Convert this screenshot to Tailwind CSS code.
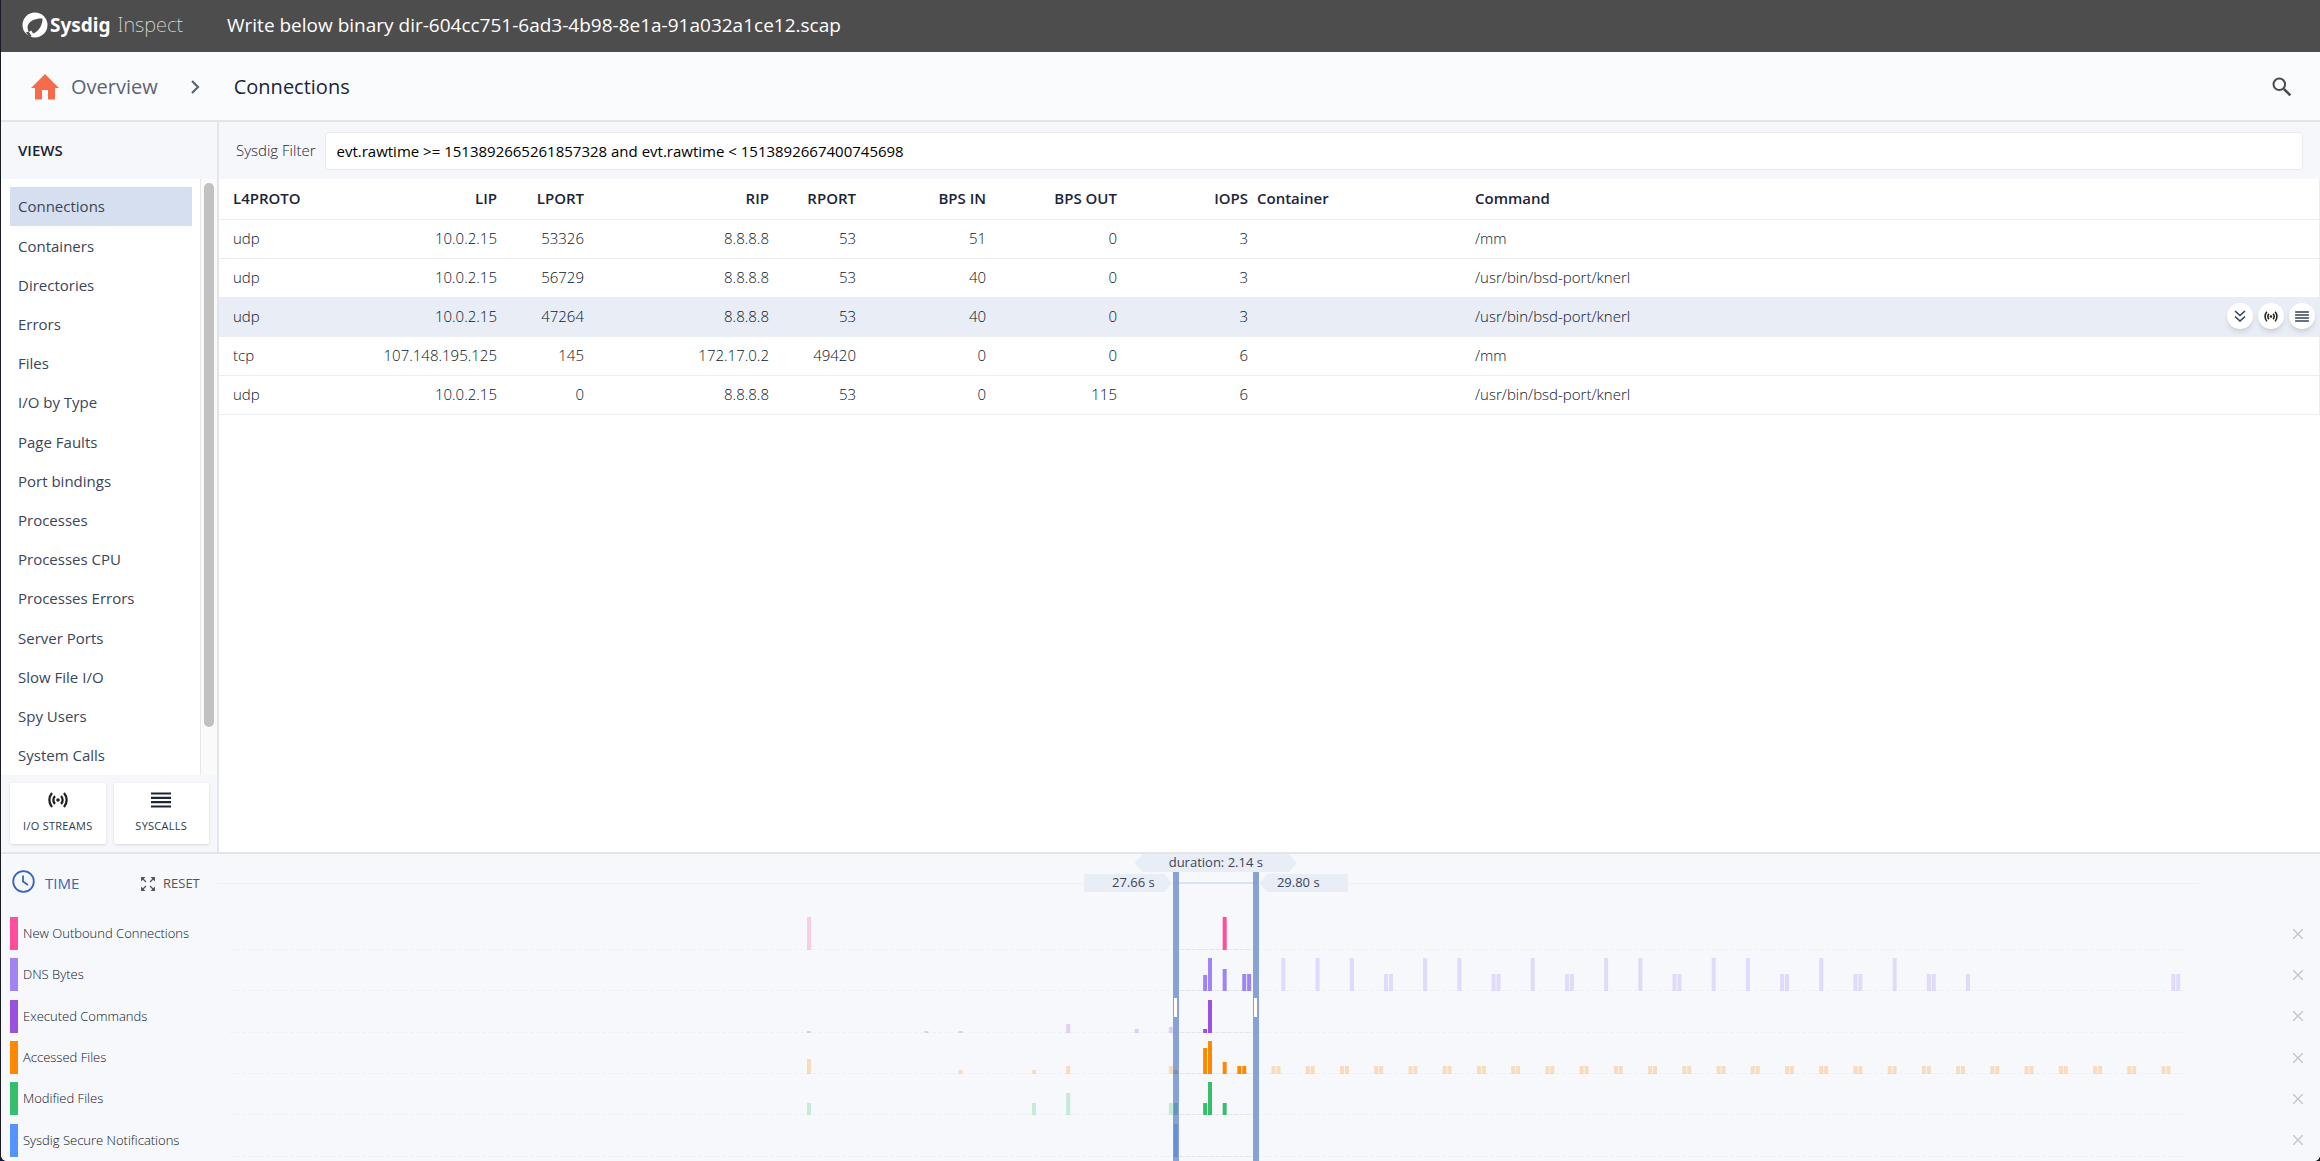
<!DOCTYPE html>
<html lang="en">
<head>
  <meta charset="UTF-8">
  <title>Sysdig Inspect</title>
  <script src="https://cdn.jsdelivr.net/npm/@tailwindcss/browser@4"></script>
</head>
<body class="bg-[#1b1b26] font-['Open_Sans',sans-serif] text-[15px] text-[#3b4559]">

  <!-- Shared icons -->
  <svg class="hidden">
    <symbol id="streams" viewBox="0 0 20 16">
      <circle cx="10" cy="8" r="1.8" fill="currentColor"/>
      <g fill="none" stroke="currentColor" stroke-width="2.3">
        <path d="M7 4.2a5.2 5.2 0 0 0 0 7.6M13 4.2a5.2 5.2 0 0 1 0 7.6"/>
        <path d="M4 1a10.6 10.6 0 0 0 0 14M16 1a10.6 10.6 0 0 1 0 14"/>
      </g>
    </symbol>
    <symbol id="lines" viewBox="0 0 20 16">
      <path d="M0 1.5h20M0 5.8h20M0 10.1h20M0 14.5h20" stroke="currentColor" stroke-width="2.2"/>
    </symbol>
  </svg>

  <div class="h-screen flex flex-col ml-px rounded-b-md overflow-hidden bg-white">

    <!-- Top bar -->
    <header class="h-[52px] shrink-0 flex items-center bg-[#4d4d4d] text-white pl-[21px] pb-0.5">
      <div class="w-[205px] flex items-center">
        <svg class="w-[26px] h-[26px]" viewBox="0 0 26 26">
          <circle cx="13" cy="13" r="12.5" fill="#fff"/>
          <path d="M20.5 6.5C15 6 8 8 6 13c-1 2.500-.3 5 1 7l2.300-1.500 1.700 3C16 20 20.500 14 20.500 6.500z" fill="#4d4d4d"/>
          <path d="M4 20.500l2.500-1 3 4.600-1.800 1.200z" fill="#4d4d4d"/>
        </svg>
        <span class="ml-0.5 font-['Noto_Sans',sans-serif] text-[19px] font-bold">Sysdig</span>
        <span class="ml-[7px] font-['Noto_Sans',sans-serif] text-[20px] font-extralight text-[#dddddd]">Inspect</span>
      </div>
      <h1 class="text-[19px]">Write below binary dir-604cc751-6ad3-4b98-8e1a-91a032a1ce12.scap</h1>
    </header>

    <!-- Breadcrumb -->
    <nav class="h-[70px] shrink-0 flex items-center border-b-2 border-[#e2e5e9] bg-[#fafbfd] pl-[30px] pr-7 pt-0.5 text-[20px]">
      <a href="#" class="flex items-center text-[#5a6375]">
        <svg class="w-7 h-[26px] mr-3" viewBox="0 0 28 26"><path d="M14 0L28 14h-4v11.500h-7V16h-6v9.500H4V14H0z" fill="#f76a4c"/></svg>
        Overview
      </a>
      <svg class="w-2.5 h-4 ml-8 mr-[34px]" viewBox="0 0 10 16"><path d="M2 2l6 6-6 6" fill="none" stroke="#5a6375" stroke-width="2.200"/></svg>
      <span class="text-[#1c2438]">Connections</span>
      <button class="ml-auto" aria-label="Search">
        <svg class="w-5 h-5" viewBox="0 0 20 20" fill="none" stroke="#4a4a4a"><circle cx="7.300" cy="7.300" r="5.800" stroke-width="2"/><path d="M11.800 11.800l6.500 6.500" stroke-width="2.600"/></svg>
      </button>
    </nav>

    <main class="flex-1 min-h-0 flex">
      <!-- Views -->
      <aside class="w-[218px] shrink-0 flex flex-col bg-[#f5f7fb] border-r-2 border-[#e2e5e9]">
        <h2 class="h-[57px] shrink-0 flex items-center pl-[17px] font-semibold text-[#1c2438]">VIEWS</h2>
        <div class="flex-1 min-h-0 flex bg-white">
          <ul id="views" class="flex-1 flex flex-col pt-2 pl-[9px] pr-2"></ul>
          <div class="w-[17px] bg-[#fafafa] border-l border-[#e8e8e8] pt-1 px-[3px]">
            <div class="h-[544px] rounded-full bg-[#c1c1c1]"></div>
          </div>
        </div>
        <div class="shrink-0 flex gap-2 pl-[9px] pr-2 py-2 text-[11px] tracking-wide text-[#2c3a50]">
          <button class="flex-1 h-[61px] flex flex-col items-center justify-center gap-2.5 bg-white rounded-xs shadow">
            <svg class="w-5 h-4 text-[#222222]"><use href="#streams"/></svg>
            I/O STREAMS
          </button>
          <button class="flex-1 h-[61px] flex flex-col items-center justify-center gap-2.5 bg-white rounded-xs shadow">
            <svg class="w-5 h-4 text-[#1c2438]"><use href="#lines"/></svg>
            SYSCALLS
          </button>
        </div>
      </aside>

      <!-- Connections -->
      <section class="flex-1 min-w-0">
        <div class="h-[57px] flex items-center gap-2.5 bg-[#f5f7fb] pl-[17px] pr-[17px]">
          <label for="filter" class="font-light text-[#1c2438]">Sysdig Filter</label>
          <input id="filter" type="text" value="evt.rawtime &gt;= 1513892665261857328 and evt.rawtime &lt; 1513892667400745698" class="flex-1 h-[38px] rounded border border-[#e8eaee] bg-white px-2.5 text-black">
        </div>
        <table class="w-full table-fixed border-r border-[#e9eef2]">
          <thead class="text-[#1c2438]">
            <tr class="h-10 border-b border-[#e9eef2] *:px-1 *:pb-0.5 *:font-semibold *:text-right">
              <th class="w-[98px] pl-3.5! text-left!">L4PROTO</th>
              <th class="w-[184px]">LIP</th>
              <th class="w-[87px]">LPORT</th>
              <th class="w-[185px]">RIP</th>
              <th class="w-[87px]">RPORT</th>
              <th class="w-[130px]">BPS IN</th>
              <th class="w-[131px]">BPS OUT</th>
              <th class="w-[131px]">IOPS</th>
              <th class="w-[219px] pl-[5px]! text-left!">Container</th>
              <th class="text-left!">Command</th>
            </tr>
          </thead>
          <tbody id="rows" class="font-light text-[#0c1428]"></tbody>
        </table>
      </section>
    </main>

    <!-- Timeline -->
    <section class="relative shrink-0 h-[309px] flex flex-col border-t-2 border-[#e2e5e9] bg-[#f6f8fc]">
      <div class="h-[59px] shrink-0 flex items-center pr-[121px]">
        <h2 class="w-[140px] flex items-center gap-2.5 pl-[11px] text-[#3565c0]">
          <svg class="w-[23px] h-[23px] mb-1" viewBox="0 0 23 23" fill="none" stroke="currentColor" stroke-width="1.800"><circle cx="11.500" cy="11.500" r="10.300"/><path d="M11 5.500v6l5 3.500"/></svg>
          TIME
        </h2>
        <button class="w-[77px] flex items-center gap-2 text-[13px] text-[#555555]">
          <svg class="w-3.5 h-3.5 shrink-0" viewBox="0 0 14 14" fill="#555" stroke="#555" stroke-width="1.300">
            <path stroke="none" d="M0 0h4.500L0 4.500zM14 0v4.500L9.500 0zM0 14V9.500L4.500 14zM14 14H9.500L14 9.500z"/>
            <path d="M1 1l4 4M13 1l-4 4M1 13l4-4M13 13l-4-4"/>
          </svg>
          RESET
        </button>
        <div class="flex-1 h-px bg-[#edf0f4]"></div>
      </div>
      <div id="tracks" class="flex-1 flex flex-col"></div>

      <!-- Selected range -->
      <div class="absolute inset-y-0 left-[229px] right-[134px] text-[13px] leading-[17px] text-[#3b4559] pointer-events-none">
        <div id="range" class="absolute inset-y-0">
          <div class="absolute -inset-x-px top-7 h-0.5 bg-[#d9e3f2]"></div>
          <div class="absolute top-0 left-1/2 -translate-x-1/2 w-[162px] h-[18px] text-center bg-[#e8edf6] [clip-path:polygon(8px_0,154px_0,100%_50%,154px_100%,8px_100%,0_50%)]">duration: 2.14 s</div>
          <div class="absolute top-5 right-full mr-1 w-[88px] h-[18px] pr-[17px] text-right bg-[#e8edf6] [clip-path:polygon(0_0,81px_0,100%_50%,81px_100%,0_100%)]">27.66 s</div>
          <div class="absolute top-5 left-full ml-1 w-[88px] h-[18px] pl-[17px] bg-[#e8edf6] [clip-path:polygon(7px_0,100%_0,100%_100%,7px_100%,0_50%)]">29.80 s</div>
          <div class="absolute top-[18px] bottom-0 -left-[3px] w-1.5 bg-[#6b8dcc]/80"><div class="mt-[126px] ml-px w-[3px] h-[19px] bg-white"></div></div>
          <div class="absolute top-[18px] bottom-0 -right-[3px] w-1.5 bg-[#6b8dcc]/80"><div class="mt-[126px] ml-px w-[3px] h-[19px] bg-white"></div></div>
        </div>
      </div>
    </section>
  </div>

  <script>
    const views = ["Connections", "Containers", "Directories", "Errors", "Files", "I/O by Type", "Page Faults", "Port bindings", "Processes", "Processes CPU", "Processes Errors", "Server Ports", "Slow File I/O", "Spy Users", "System Calls"];

    document.getElementById("views").innerHTML = views.map((view, i) => `
      <li class="flex-1 flex">
        <a href="#" class="flex-1 flex items-center pl-2 ${i === 0 ? "bg-[#d5dfef]" : ""}">${view}</a>
      </li>`).join("");

    const connections = [
      ["udp", "10.0.2.15", 53326, "8.8.8.8", 53, 51, 0, 3, "", "/mm"],
      ["udp", "10.0.2.15", 56729, "8.8.8.8", 53, 40, 0, 3, "", "/usr/bin/bsd-port/knerl"],
      ["udp", "10.0.2.15", 47264, "8.8.8.8", 53, 40, 0, 3, "", "/usr/bin/bsd-port/knerl"],
      ["tcp", "107.148.195.125", 145, "172.17.0.2", 49420, 0, 0, 6, "", "/mm"],
      ["udp", "10.0.2.15", 0, "8.8.8.8", 53, 0, 115, 6, "", "/usr/bin/bsd-port/knerl"]
    ];
    const active = 2;

    const actions = `
      <div class="absolute inset-y-0 right-[5px] flex items-center gap-[5px] text-[#33415c]">
        <button aria-label="Drill down" class="w-[26px] h-[26px] rounded-full bg-white shadow-md flex items-center justify-center">
          <svg class="w-3 h-3" viewBox="0 0 12 12" fill="none" stroke="currentColor" stroke-width="1.600"><path d="M1 1l5 4.500L11 1M1 6.500L6 11l5-4.500"/></svg>
        </button>
        <button aria-label="I/O streams" class="w-[26px] h-[26px] rounded-full bg-white shadow-md flex items-center justify-center text-[#222222]">
          <svg class="w-3.5 h-[11px]"><use href="#streams"/></svg>
        </button>
        <button aria-label="Syscalls" class="w-[26px] h-[26px] rounded-full bg-white shadow-md flex items-center justify-center">
          <svg class="w-3.5 h-[11px]"><use href="#lines"/></svg>
        </button>
      </div>`;

    document.getElementById("rows").innerHTML = connections.map((row, i) => `
      <tr class="relative h-[39px] border-b border-[#e9eef2] ${i === active ? "bg-[#e8edf6]" : ""}">
        ${row.map((cell, c) => `<td class="px-1 ${c === 0 ? "pl-3.5" : c < 8 ? "text-right" : ""}">${cell}${c === 9 && i === active ? actions : ""}</td>`).join("")}
      </tr>`).join("");

    // Each bar is [slot, height], the capture is split into 400 slots
    const slots = 400;
    const selected = [193, 209];
    const tall = [215, 222, 229, 244, 251, 266, 281, 288, 303, 310, 325, 340].map(s => [s, 33]);
    const short = [236, 237, 258, 259, 273, 274, 295, 296, 317, 318, 332, 333, 347, 348, 355, 397, 398].map(s => [s, 17]);
    const polling = [];
    for (let s = 213; s <= 395; s += 7) polling.push([s, 8], [s + 1, 8]);

    const tracks = [
      { name: "New Outbound Connections", color: "#ff4e9b", bars: [[118, 33], [203, 33]] },
      { name: "DNS Bytes", color: "#9f84f3", bars: [[199, 16], [200, 33], [203, 22], [207, 17], [208, 17], ...tall, ...short] },
      { name: "Executed Commands", color: "#9a51e0", bars: [[118, 2], [142, 2], [149, 2], [171, 9], [185, 4], [192, 6], [199, 4], [200, 33]] },
      { name: "Accessed Files", color: "#ff8800", bars: [[118, 15], [149, 4], [164, 4], [171, 8], [192, 8], [193, 4], [199, 26], [200, 33], [203, 12], [206, 8], [207, 8], ...polling] },
      { name: "Modified Files", color: "#35bf6d", bars: [[118, 12], [164, 12], [171, 22], [192, 12], [193, 12], [199, 12], [200, 33], [203, 12]] },
      { name: "Sysdig Secure Notifications", color: "#5594ff", bars: [[193, 33]] }
    ];

    const percent = slot => slot / slots * 100 + "%";
    const inside = slot => slot >= selected[0] && slot < selected[1];

    document.getElementById("tracks").innerHTML = tracks.map(track => `
      <div class="flex-1 flex items-center pl-[9px] text-[13px]">
        <span class="w-2 h-[33px]" style="background: ${track.color}"></span>
        <span class="w-[212px] pl-[5px] font-light text-[#0c1428]">${track.name}</span>
        <svg class="flex-1 min-w-0 h-[33px]">
          <line x1="0" y1="32.500" x2="100%" y2="32.500" stroke="#eff1f4" stroke-dasharray="4 2"/>
          <line x1="${percent(selected[0])}" y1="32.500" x2="${percent(selected[1])}" y2="32.500" stroke="#e3e5e8" stroke-dasharray="4 2"/>
          ${track.bars.map(([slot, height]) => `<rect x="${percent(slot)}" y="${33 - height}" width="4" height="${height}" fill="${track.color}" opacity="${inside(slot) ? 1 : 0.25}"/>`).join("")}
        </svg>
        <button aria-label="Remove ${track.name}" class="w-[134px] flex justify-end pr-[17px]">
          <svg class="w-2.5 h-2.5" viewBox="0 0 10 10" stroke="#c3c6cb" stroke-width="1.400"><path d="M0 0l10 10M10 0L0 10"/></svg>
        </button>
      </div>`).join("");

    const range = document.getElementById("range");
    range.style.left = (selected[0] + 0.4) / slots * 100 + "%";
    range.style.width = (selected[1] - selected[0] + 0.4) / slots * 100 + "%";
  </script>
</body>
</html>
